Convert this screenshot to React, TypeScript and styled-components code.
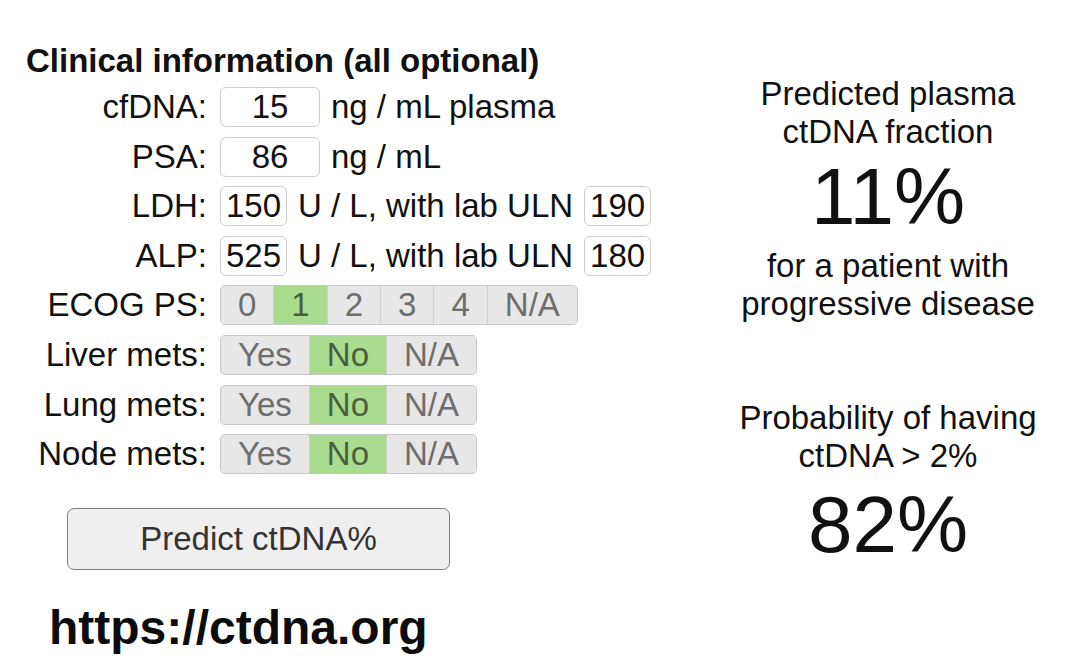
import React from "react";
import styled, { createGlobalStyle } from "styled-components";

const GlobalStyle = createGlobalStyle`
  body {
    margin: 0;
    background: #ffffff;
    font-family: "Liberation Sans", Arial, Helvetica, sans-serif;
    color: #111111;
  }
`;

const Page = styled.div`
  display: flex;
  width: 1068px;
  height: 670px;
  overflow: hidden;
`;

const FormColumn = styled.div`
  width: 708px;
  display: flex;
  flex-direction: column;
  align-items: flex-start;
  padding-top: 42px;
`;

const Title = styled.h2`
  margin: 0 0 8px 26px;
  font-size: 33px;
  line-height: 37px;
  font-weight: bold;
`;

const Fields = styled.div`
  display: grid;
  grid-template-columns: 177px auto;
  grid-auto-rows: 40px;
  column-gap: 13px;
  row-gap: 9.6px;
  align-items: center;
  margin-left: 30px;
`;

const Label = styled.label`
  justify-self: end;
  font-size: 33px;
  white-space: nowrap;
`;

const Controls = styled.div`
  display: flex;
  align-items: center;
  gap: 11px;
  font-size: 33px;
  white-space: nowrap;
`;

const NumberBox = styled.input<{ $width: number }>`
  box-sizing: border-box;
  width: ${(p) => p.$width}px;
  height: 40px;
  border: 1px solid #cdcdcd;
  border-radius: 6px;
  padding: 0;
  font-family: inherit;
  font-size: 33px;
  color: #111;
  text-align: center;
  background: #fff;
`;

const Segmented = styled.div`
  display: inline-flex;
  height: 40px;
  box-sizing: border-box;
  border: 1px solid #c6c6c6;
  border-radius: 5px;
  overflow: hidden;
  background: #e7e7e7;
`;

const Segment = styled.button<{ $active?: boolean }>`
  padding: 0 17px;
  border: none;
  border-left: 1px solid #cfcfcf;
  background: ${(p) => (p.$active ? "#a9dc8e" : "#e7e7e7")};
  color: ${(p) => (p.$active ? "#4b5e40" : "#6e6e6e")};
  font-family: inherit;
  font-size: 33px;
  line-height: 38px;

  &:first-child {
    border-left: none;
  }
`;

const PredictButton = styled.button`
  box-sizing: border-box;
  width: 383px;
  height: 62px;
  margin: 34px 0 0 67px;
  background: #efefef;
  border: 1.5px solid #7d7d7d;
  border-radius: 7px;
  font-family: inherit;
  font-size: 33px;
  color: #333;
`;

const SiteLink = styled.div`
  margin: 31px 0 0 49px;
  font-size: 48px;
  font-weight: bold;
  line-height: 53px;
  color: #0c0c0c;
`;

const ResultColumn = styled.div`
  flex: 1;
  display: flex;
  flex-direction: column;
  align-items: center;
  padding-top: 75px;
  text-align: center;
`;

const Caption = styled.div`
  font-size: 33px;
  line-height: 38px;
`;

const BigValue = styled.div<{ $gapTop: number; $gapBottom?: number }>`
  margin: ${(p) => p.$gapTop}px 0 ${(p) => p.$gapBottom ?? 0}px;
  font-size: 80px;
  line-height: 80px;
`;

const ResultBlock = styled.div<{ $gapTop?: number }>`
  display: flex;
  flex-direction: column;
  align-items: center;
  margin-top: ${(p) => p.$gapTop ?? 0}px;
`;

type SegProps = { options: string[]; selected: string };

function SegmentGroup({ options, selected }: SegProps) {
  return (
    <Segmented>
      {options.map((o) => (
        <Segment key={o} $active={o === selected}>
          {o}
        </Segment>
      ))}
    </Segmented>
  );
}

const ecog = ["0", "1", "2", "3", "4", "N/A"];
const yesNo = ["Yes", "No", "N/A"];

export default function App() {
  return (
    <>
      <GlobalStyle />
      <Page>
        <FormColumn>
          <Title>Clinical information (all optional)</Title>
          <Fields>
            <Label>cfDNA:</Label>
            <Controls>
              <NumberBox $width={100} defaultValue="15" />
              <span>ng / mL plasma</span>
            </Controls>

            <Label>PSA:</Label>
            <Controls>
              <NumberBox $width={100} defaultValue="86" />
              <span>ng / mL</span>
            </Controls>

            <Label>LDH:</Label>
            <Controls>
              <NumberBox $width={67} defaultValue="150" />
              <span>U / L, with lab ULN</span>
              <NumberBox $width={67} defaultValue="190" />
            </Controls>

            <Label>ALP:</Label>
            <Controls>
              <NumberBox $width={67} defaultValue="525" />
              <span>U / L, with lab ULN</span>
              <NumberBox $width={67} defaultValue="180" />
            </Controls>

            <Label>ECOG PS:</Label>
            <Controls>
              <SegmentGroup options={ecog} selected="1" />
            </Controls>

            <Label>Liver mets:</Label>
            <Controls>
              <SegmentGroup options={yesNo} selected="No" />
            </Controls>

            <Label>Lung mets:</Label>
            <Controls>
              <SegmentGroup options={yesNo} selected="No" />
            </Controls>

            <Label>Node mets:</Label>
            <Controls>
              <SegmentGroup options={yesNo} selected="No" />
            </Controls>
          </Fields>
          <PredictButton>Predict ctDNA%</PredictButton>
          <SiteLink>https://ctdna.org</SiteLink>
        </FormColumn>

        <ResultColumn>
          <ResultBlock>
            <Caption>Predicted plasma</Caption>
            <Caption>ctDNA fraction</Caption>
            <BigValue $gapTop={6} $gapBottom={10}>
              11%
            </BigValue>
            <Caption>for a patient with</Caption>
            <Caption>progressive disease</Caption>
          </ResultBlock>
          <ResultBlock $gapTop={76}>
            <Caption>Probability of having</Caption>
            <Caption>ctDNA &gt; 2%</Caption>
            <BigValue $gapTop={10}>82%</BigValue>
          </ResultBlock>
        </ResultColumn>
      </Page>
    </>
  );
}
